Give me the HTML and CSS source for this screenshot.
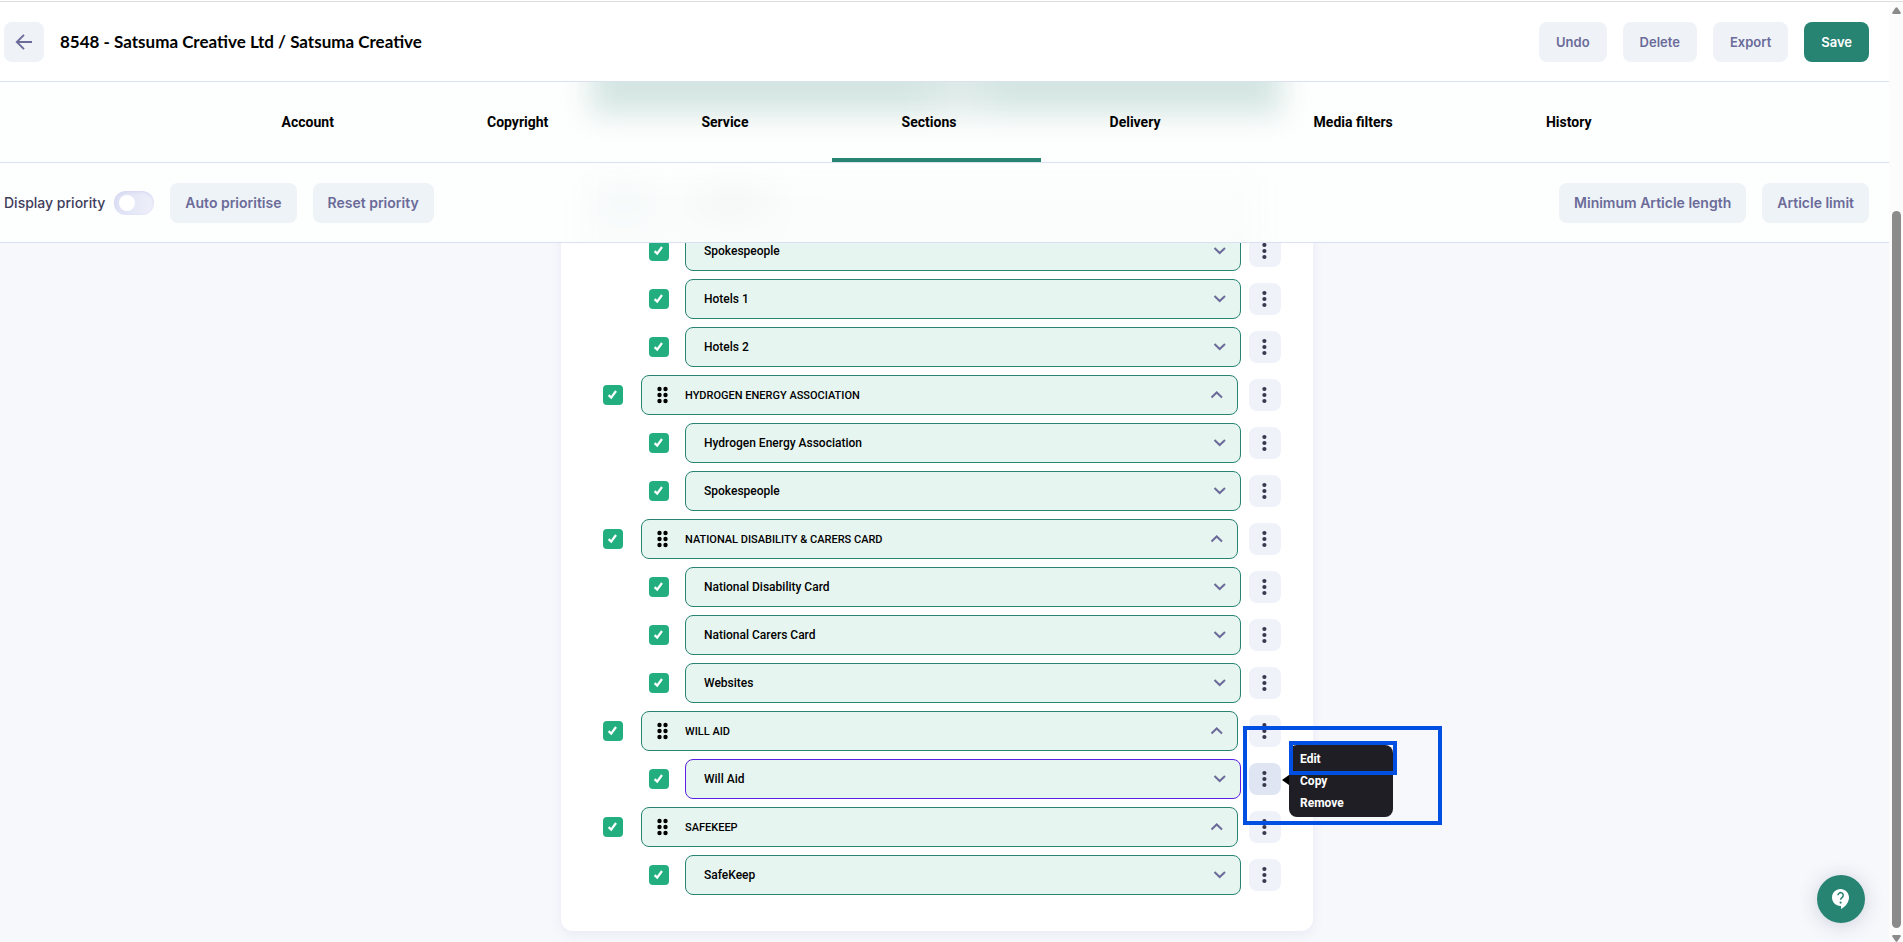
FILE: index.html
```html
<!DOCTYPE html>
<html lang="en">
<head>
<meta charset="utf-8">
<title>Satsuma Creative</title>
<link rel="stylesheet" href="styles.css">
</head>
<body>
<svg class="sprite" aria-hidden="true">
  <symbol id="tick" viewBox="0 0 20 20"><path d="M5.6 10.100 8.200 12.600 13 6" fill="none" stroke="#fff" stroke-width="2.3"/></symbol>
  <symbol id="down" viewBox="0 0 16 16"><path d="M2.500 5 7.700 10 13 5" fill="none" stroke="currentColor" stroke-width="2"/></symbol>
  <symbol id="up" viewBox="0 0 16 16"><path d="M2.500 10.500 7.700 5.500 13 10.500" fill="none" stroke="currentColor" stroke-width="2"/></symbol>
  <symbol id="dots" viewBox="0 0 16 16"><circle cx="7.400" cy="2" r="2.100"/><circle cx="7.400" cy="8" r="2.100"/><circle cx="7.400" cy="14" r="2.100"/></symbol>
  <symbol id="drag" viewBox="0 0 12 18"><circle cx="2.500" cy="3" r="2.200"/><circle cx="8.500" cy="3" r="2.200"/><circle cx="2.500" cy="9" r="2.200"/><circle cx="8.500" cy="9" r="2.200"/><circle cx="2.500" cy="15" r="2.200"/><circle cx="8.500" cy="15" r="2.200"/></symbol>
</svg>
<div class="page">
  <div class="content">
    <header class="topbar">
      <button class="btn back" aria-label="Back"><svg width="20" height="20" viewBox="0 0 20 20"><path d="M18 10H3M10 2.800 2.800 10 10 17.200" fill="none" stroke="currentColor" stroke-width="1.900"/></svg></button>
      <h1>8548 - Satsuma Creative Ltd / Satsuma Creative</h1>
      <div class="actions">
        <button class="btn">Undo</button>
        <button class="btn">Delete</button>
        <button class="btn">Export</button>
        <button class="btn primary">Save</button>
      </div>
    </header>
    <nav class="tabs">
      <div class="haze haze-band"></div>
      <div class="tab-list">
        <a href="#">Account</a>
        <a href="#">Copyright</a>
        <a href="#">Service</a>
        <a href="#" aria-current="page">Sections</a>
        <a href="#">Delivery</a>
        <a href="#">Media filters</a>
        <a href="#">History</a>
        <span class="indicator"></span>
      </div>
    </nav>
    <div class="toolbar">
      <div class="haze haze-rows"></div>
      <label class="switch-label" for="priority">Display priority</label>
      <input class="switch" type="checkbox" id="priority">
      <button class="btn">Auto prioritise</button>
      <button class="btn">Reset priority</button>
      <div class="actions">
        <button class="btn">Minimum Article length</button>
        <button class="btn">Article limit</button>
      </div>
    </div>
    <main class="stage">
      <section class="card">
        <div class="row child">
          <span class="check"><input type="checkbox" checked aria-label="Spokespeople"><svg><use href="#tick"/></svg></span>
          <button class="item">Spokespeople<svg class="chev"><use href="#down"/></svg></button>
          <button class="more" aria-label="More"><svg><use href="#dots"/></svg></button>
        </div>
        <div class="row child">
          <span class="check"><input type="checkbox" checked aria-label="Hotels 1"><svg><use href="#tick"/></svg></span>
          <button class="item">Hotels 1<svg class="chev"><use href="#down"/></svg></button>
          <button class="more" aria-label="More"><svg><use href="#dots"/></svg></button>
        </div>
        <div class="row child">
          <span class="check"><input type="checkbox" checked aria-label="Hotels 2"><svg><use href="#tick"/></svg></span>
          <button class="item">Hotels 2<svg class="chev"><use href="#down"/></svg></button>
          <button class="more" aria-label="More"><svg><use href="#dots"/></svg></button>
        </div>
        <div class="row parent">
          <span class="check"><input type="checkbox" checked aria-label="Hydrogen group"><svg><use href="#tick"/></svg></span>
          <button class="item"><svg class="grip"><use href="#drag"/></svg>HYDROGEN ENERGY ASSOCIATION<svg class="chev"><use href="#up"/></svg></button>
          <button class="more" aria-label="More"><svg><use href="#dots"/></svg></button>
        </div>
        <div class="row child">
          <span class="check"><input type="checkbox" checked aria-label="Hydrogen Energy Association"><svg><use href="#tick"/></svg></span>
          <button class="item">Hydrogen Energy Association<svg class="chev"><use href="#down"/></svg></button>
          <button class="more" aria-label="More"><svg><use href="#dots"/></svg></button>
        </div>
        <div class="row child">
          <span class="check"><input type="checkbox" checked aria-label="Spokespeople"><svg><use href="#tick"/></svg></span>
          <button class="item">Spokespeople<svg class="chev"><use href="#down"/></svg></button>
          <button class="more" aria-label="More"><svg><use href="#dots"/></svg></button>
        </div>
        <div class="row parent">
          <span class="check"><input type="checkbox" checked aria-label="National Disability group"><svg><use href="#tick"/></svg></span>
          <button class="item"><svg class="grip"><use href="#drag"/></svg>NATIONAL DISABILITY &amp; CARERS CARD<svg class="chev"><use href="#up"/></svg></button>
          <button class="more" aria-label="More"><svg><use href="#dots"/></svg></button>
        </div>
        <div class="row child">
          <span class="check"><input type="checkbox" checked aria-label="National Disability Card"><svg><use href="#tick"/></svg></span>
          <button class="item">National Disability Card<svg class="chev"><use href="#down"/></svg></button>
          <button class="more" aria-label="More"><svg><use href="#dots"/></svg></button>
        </div>
        <div class="row child">
          <span class="check"><input type="checkbox" checked aria-label="National Carers Card"><svg><use href="#tick"/></svg></span>
          <button class="item">National Carers Card<svg class="chev"><use href="#down"/></svg></button>
          <button class="more" aria-label="More"><svg><use href="#dots"/></svg></button>
        </div>
        <div class="row child">
          <span class="check"><input type="checkbox" checked aria-label="Websites"><svg><use href="#tick"/></svg></span>
          <button class="item">Websites<svg class="chev"><use href="#down"/></svg></button>
          <button class="more" aria-label="More"><svg><use href="#dots"/></svg></button>
        </div>
        <div class="row parent">
          <span class="check"><input type="checkbox" checked aria-label="Will Aid group"><svg><use href="#tick"/></svg></span>
          <button class="item"><svg class="grip"><use href="#drag"/></svg>WILL AID<svg class="chev"><use href="#up"/></svg></button>
          <button class="more" aria-label="More"><svg><use href="#dots"/></svg></button>
        </div>
        <div class="row child active">
          <span class="check"><input type="checkbox" checked aria-label="Will Aid"><svg><use href="#tick"/></svg></span>
          <button class="item">Will Aid<svg class="chev"><use href="#down"/></svg></button>
          <button class="more" aria-label="More"><svg><use href="#dots"/></svg></button>
          <div class="menu">
            <button>Edit</button>
            <button>Copy</button>
            <button>Remove</button>
          </div>
          <span class="frame frame-area"></span>
          <span class="frame frame-edit"></span>
        </div>
        <div class="row parent">
          <span class="check"><input type="checkbox" checked aria-label="Safekeep group"><svg><use href="#tick"/></svg></span>
          <button class="item"><svg class="grip"><use href="#drag"/></svg>SAFEKEEP<svg class="chev"><use href="#up"/></svg></button>
          <button class="more" aria-label="More"><svg><use href="#dots"/></svg></button>
        </div>
        <div class="row child">
          <span class="check"><input type="checkbox" checked aria-label="SafeKeep"><svg><use href="#tick"/></svg></span>
          <button class="item">SafeKeep<svg class="chev"><use href="#down"/></svg></button>
          <button class="more" aria-label="More"><svg><use href="#dots"/></svg></button>
        </div>
      </section>
      <button class="help" aria-label="Help"><svg width="24" height="24" viewBox="0 0 24 24"><path fill="#fff" d="M11.5 2C6.81 2 3 5.81 3 10.5S6.81 19 11.5 19h.5v3c4.86-2.34 8-7 8-11.5C20 5.81 16.19 2 11.5 2z"/><path d="M9 8.200a2.600 2.600 0 1 1 4.200 2.100c-.9.7-1.600 1.200-1.600 2.500" fill="none" stroke="#278372" stroke-width="1.500"/><circle cx="11.600" cy="15.600" r="1.100" fill="#278372"/></svg></button>
    </main>
  </div>
  <div class="scrollbar">
    <svg width="9" height="7" viewBox="0 0 9 7"><path d="M3.500.8Q4.500-.4 5.500.8L8.700 5.500Q9 7 8 7H1Q0 7 .3 5.500z"/></svg>
    <span class="thumb"></span>
    <svg width="9" height="7" viewBox="0 0 9 7"><path d="M3.500 6.200Q4.500 7.400 5.500 6.200L8.700 1.500Q9 0 8 0H1Q0 0 .3 1.500z"/></svg>
  </div>
</div>
</body>
</html>
```
FILE: styles.css
```css
* { box-sizing: border-box; }

body {
  margin: 0;
  background: #fff;
  color: #000;
  font-family: Roboto, "Liberation Sans", sans-serif;
  font-size: 14px;
}

button { font: inherit; border: 0; padding: 0; cursor: pointer; }
.sprite { position: absolute; width: 0; height: 0; }

.page {
  display: flex;
  height: 100vh;
  padding-top: 1px;
  overflow: hidden;
}
.page::before { content: ""; position: absolute; left: 0; right: 0; top: 1px; height: 1px; background: #dcdfe0; }

.content { flex: 1; min-width: 0; display: flex; flex-direction: column; background: #f7f8fc; }

.topbar, .toolbar {
  flex: none;
  display: flex;
  align-items: center;
  gap: 16px;
  padding: 0 20px 0 4px;
  border-bottom: 1px solid #d9e0f0;
}
.topbar { height: 81px; background: #fff; padding-top: 2px; }
.topbar h1 { margin: 0; padding-bottom: 2px; font-family: Lato, sans-serif; font-size: 17px; font-weight: 700; }
.actions { display: flex; gap: 16px; margin-left: auto; }

.btn {
  height: 40px;
  padding: 0 17px;
  border-radius: 8px;
  background: #eff3f8;
  color: #6b6b99;
  font-family: Inter, sans-serif;
  font-size: 13px;
  font-weight: 600;
}
.btn.primary { background: #278372; color: #fff; }
.btn.back { width: 40px; padding: 0; display: grid; place-items: center; }

.tabs { flex: none; position: relative; overflow: hidden; height: 81px; padding-right: 16px; background: #fdfefe; border-bottom: 1px solid #d9e0f0; }
.tab-list {
  position: relative;
  height: 100%;
  max-width: 1463px;
  margin: 0 auto;
  display: flex;
  justify-content: space-around;
  align-items: center;
}
.tab-list a { color: #000; font-weight: 700; text-decoration: none; }
.indicator { position: absolute; bottom: 0; left: calc(300% / 7); width: calc(100% / 7); height: 4px; background: #278372; }

.toolbar { position: relative; overflow: hidden; height: 80px; background: #fdfefe; }
.toolbar .btn { position: relative; padding: 0 15px; background: #eef3f7; font-size: 14px; }
.switch-label { position: relative; color: #3f3d5c; font-family: Inter, sans-serif; font-size: 14px; font-weight: 500; }
.switch {
  appearance: none;
  position: relative;
  width: 40px;
  height: 24px;
  margin: 0;
  border-radius: 12px;
  background: linear-gradient(100deg, #dcdff4, #eff1fa);
  box-shadow: inset 0 1px 3px #d3d5ee;
}
.switch::before { content: ""; position: absolute; left: 5px; top: 4px; width: 16px; height: 16px; border-radius: 50%; background: #fff; }
.switch-label + .switch { margin-left: -7px; }

.haze { position: absolute; left: 50%; pointer-events: none; }
.haze-band {
  top: -40px;
  width: 690px;
  height: 72px;
  margin-left: -354px;
  background: linear-gradient(90deg, #d4e6e2 46%, #dfebe9 54%, #d4e6e2 60%);
  filter: blur(14px);
}
.haze-rows {
  top: 14px;
  width: 680px;
  height: 80px;
  margin-left: -364px;
  background:
    radial-gradient(70px 34px at 150px 26px, #f5f6f6, transparent),
    radial-gradient(46px 34px at 44px 26px, #f3f9f8, transparent),
    linear-gradient(#fcfdfd, #fafcfc);
  filter: blur(10px);
}

.stage {
  flex: 1;
  min-height: 0;
  position: relative;
  overflow: hidden;
  display: flex;
  flex-direction: column;
  justify-content: flex-end;
  align-items: center;
  padding-bottom: 11px;
}

.card {
  flex: none;
  width: 752px;
  margin-right: 15px;
  padding: 32px 32px 36px 42px;
  display: grid;
  gap: 8px;
  background: #fff;
  border-radius: 12px;
  box-shadow: 0 4px 12px #e9ebf5;
}
.row { position: relative; display: flex; align-items: center; }
.row.child { padding-left: 46px; }
.check { display: grid; margin-right: 18px; }
.child .check { margin-right: 16px; }
.check > * { grid-area: 1 / 1; width: 20px; height: 20px; margin: 0; }
.check input { appearance: none; border-radius: 4px; background: #22ae7f; }
.check svg { pointer-events: none; }

.item {
  flex: 1;
  height: 40px;
  margin-right: 11px;
  padding: 0 12px 0 15px;
  display: flex;
  align-items: center;
  border: 1px solid #278372;
  border-radius: 8px;
  background: #e7f5f0;
  font-size: 12px;
  font-weight: 500;
  color: #000;
}
.parent .item { font-size: 11px; }
.child .item { margin-right: 8px; padding-left: 18px; }
.active .item { border-color: #5a1fe0; }
.grip { width: 12px; height: 18px; margin-right: 16px; }
.chev { width: 16px; height: 16px; margin-left: auto; color: #6b6b99; }

.more { width: 32px; height: 32px; border-radius: 8px; background: #eff3f9; display: grid; place-items: center; }
.more svg { width: 16px; height: 16px; fill: #39384f; overflow: visible; }
#dots { overflow: visible; }
.active .more { background: #dfe5f2; }

.menu {
  position: absolute;
  left: calc(100% + 8px);
  top: -14px;
  z-index: 1;
  width: 104px;
  padding: 3px 0;
  border-radius: 8px;
  background: #1f1e24;
}
.menu::before { content: ""; position: absolute; left: -7px; top: 30px; border: 5px solid transparent; border-left-width: 0; border-right: 7px solid #000; }
.menu button { display: block; width: 100%; height: 22px; padding-left: 11px; background: none; color: #fff; font-size: 12px; font-weight: 700; text-align: left; }
.frame { position: absolute; z-index: 2; border: 4px solid #004fe3; pointer-events: none; }
.frame-area { left: calc(100% - 38px); top: -33px; width: 199px; height: 99px; }
.frame-edit { left: calc(100% + 8px); top: -18px; width: 108px; height: 34px; }

.help {
  position: absolute;
  right: 24px;
  bottom: 19px;
  width: 48px;
  height: 48px;
  border-radius: 50%;
  background: #278372;
  box-shadow: 0 2px 20px #ccd0da;
  display: grid;
  place-items: center;
}

.scrollbar {
  flex: none;
  width: 14px;
  padding: 6px 2px 0 3px;
  display: flex;
  flex-direction: column;
  background: #fcfcfc;
}
.scrollbar svg { flex: none; fill: #8b8b8b; }
.thumb { flex: 1; margin: 197px 0 7px; border-radius: 5px; background: #8b8b8b; }
```
